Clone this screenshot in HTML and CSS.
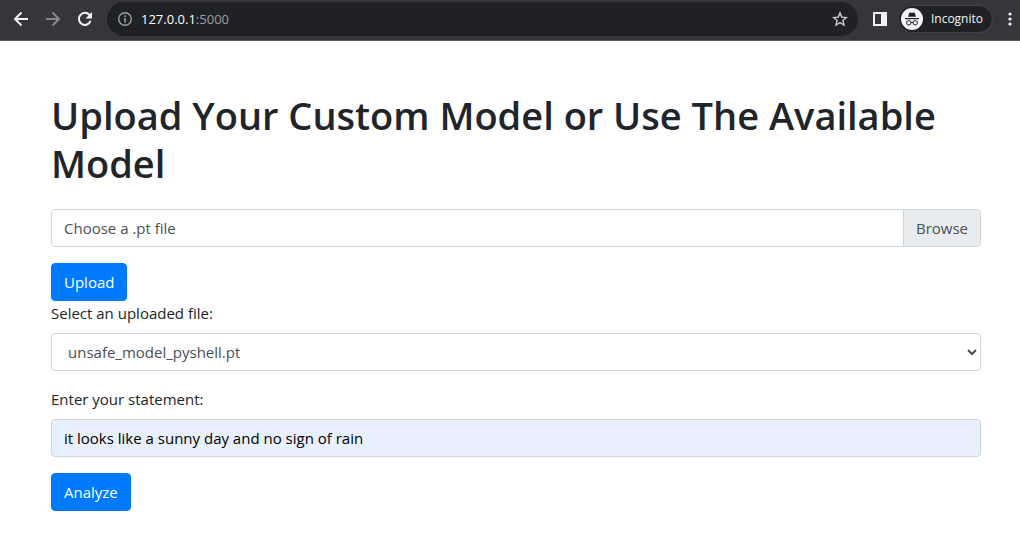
FILE: index.html
```html
<!DOCTYPE html>
<html lang="en">
<head>
<meta charset="utf-8">
<title>Upload Your Custom Model</title>
<link rel="stylesheet" href="styles.css">
</head>
<body>
<header class="toolbar">
  <nav class="nav">
    <button class="icon-btn" type="button" aria-label="Back"><svg width="16" height="16" viewBox="0 0 16 16" fill="none" stroke="#f1f3f4" stroke-width="2"><path d="M15 8H2.5M8.5 1.5L2 8l6.500 6.500"/></svg></button>
    <button class="icon-btn" type="button" aria-label="Forward"><svg width="16" height="16" viewBox="0 0 16 16" fill="none" stroke="#86888a" stroke-width="2"><path d="M1 8h12.500M7.500 1.500L14 8l-6.500 6.500"/></svg></button>
    <button class="icon-btn" type="button" aria-label="Reload"><svg width="16" height="16" viewBox="0 0 16 16"><path d="M13.600 9.800A6 6 0 1 1 12.500 4" fill="none" stroke="#f1f3f4" stroke-width="2"/><path d="M15 1v6.500H8.500z" fill="#f1f3f4"/></svg></button>
  </nav>
  <div class="address">
    <svg width="16" height="16" viewBox="0 0 16 16"><circle cx="8" cy="8" r="6.300" fill="none" stroke="#9aa0a6" stroke-width="1.400"/><path d="M7.200 7h1.600v4.500H7.200zM7.200 4.300h1.600v1.600H7.200z" fill="#9aa0a6"/></svg>
    <span class="url"><span class="host">127.0.0.1</span>:5000</span>
    <button class="star" type="button" aria-label="Bookmark this tab"><svg width="16" height="16" viewBox="0 0 16 16" fill="none" stroke="#c8cacd" stroke-width="1.400"><path d="M8 1.900l1.800 4.200 4.600.4-3.500 3 1.100 4.500L8 11.600 4 14l1.100-4.500-3.500-3 4.600-.4z"/></svg></button>
  </div>
  <button class="icon-btn" type="button" aria-label="Side panel"><svg width="16" height="16" viewBox="0 0 16 16"><path fill="#f1f3f4" fill-rule="evenodd" d="M1 1h14v14H1zM3 3v10h6V3z"/></svg></button>
  <button class="profile" type="button">
    <svg width="22" height="22" viewBox="0 0 22 22"><circle cx="11" cy="11" r="11" fill="#f1f3f4"/><path d="M7 8.800l1.200-3.700c.2-.6.700-.7 1.200-.5l1.600.5 1.600-.5c.5-.2 1-.1 1.200.5L15 8.800zM4 10h14v1.200H4z" fill="#202124"/><g fill="none" stroke="#202124"><circle cx="7.800" cy="14.800" r="2.200"/><circle cx="14.200" cy="14.800" r="2.200"/><path d="M10 14.500q1-.6 2 0"/></g></svg>
    <span>Incognito</span>
  </button>
  <button class="menu" type="button" aria-label="Menu"><svg width="4" height="16" viewBox="0 0 4 16" fill="#f1f3f4"><circle cx="2" cy="3" r="1.600"/><circle cx="2" cy="8" r="1.600"/><circle cx="2" cy="13" r="1.600"/></svg></button>
</header>
<main class="content">
  <h1 class="title">Upload Your Custom Model or Use The Available Model</h1>
  <form class="form">
    <div class="file">
      <input class="file-input" type="file" id="model-file" accept=".pt">
      <label class="file-label" for="model-file"><span class="file-text">Choose a .pt file</span><span class="file-browse">Browse</span></label>
    </div>
    <button class="btn" type="button">Upload</button>
  </form>
  <form class="form">
    <div class="group">
      <label class="label" for="uploaded">Select an uploaded file:</label>
      <select class="control" id="uploaded"><option>unsafe_model_pyshell.pt</option></select>
    </div>
    <div class="group">
      <label class="label" for="statement">Enter your statement:</label>
      <input class="control filled" type="text" id="statement" value="it looks like a sunny day and no sign of rain">
    </div>
    <button class="btn" type="button">Analyze</button>
  </form>
</main>
</body>
</html>
```
FILE: styles.css
```css
* { box-sizing: border-box; }
body {
  margin: 0;
  background: #fff;
  color: #212529;
  font: 15px/24px "Open Sans", "Noto Sans", sans-serif;
}
button, input, select { font: inherit; }
svg { display: block; flex: none; }

.toolbar {
  display: flex;
  align-items: center;
  height: 41px;
  padding: 0 8px 2px 13px;
  background: #35363a;
  border-bottom: 1px solid #5b5c5f;
}
.nav { display: flex; gap: 16px; margin-right: 14px; }
.toolbar button { color: #f1f3f4; border: 0; padding: 0; background: none; }
.address {
  flex: 1;
  display: flex;
  align-items: center;
  height: 34px;
  margin-right: 14px;
  padding: 0 10px;
  border-radius: 17px;
  background: #202124;
  color: #9aa0a6;
  font-size: 13px;
}
.url { flex: 1; margin-left: 8px; }
.host { color: #fff; }
.toolbar .profile {
  display: flex;
  align-items: center;
  gap: 8px;
  height: 28px;
  margin: 0 15px 0 10px;
  padding: 0 9px 0 2px;
  border: 1px solid #414246;
  border-radius: 14px;
  background: #202124;
  font-size: 12px;
  font-weight: 500;
}

.content { padding: 50px 39px 32px 51px; }
.title {
  margin: 0 0 22px;
  font-size: 38px;
  font-weight: 600;
  line-height: 48px;
}
.file { position: relative; margin-bottom: 16px; }
.file-input {
  position: absolute;
  inset: 0;
  width: 100%;
  opacity: 0;
}
.file-label {
  display: flex;
  height: 38px;
  border: 1px solid #ced4da;
  border-radius: 4px;
  overflow: hidden;
  color: #495057;
}
.file-text { flex: 1; padding: 6px 12px; }
.file-browse {
  padding: 6px 12px;
  border-left: 1px solid #ced4da;
  background: #e9ecef;
}
.btn {
  display: block;
  height: 38px;
  padding: 6px 12px;
  border: 1px solid #007bff;
  border-radius: 4px;
  background: #007bff;
  color: #fff;
}
.group { margin-bottom: 16px; }
.label { display: block; margin-bottom: 8px; }
.control {
  display: block;
  width: 100%;
  height: 38px;
  padding: 6px 12px;
  border: 1px solid #ced4da;
  border-radius: 4px;
  background: #fff;
  color: #495057;
}
.filled { background: #e8f0fe; color: #000; }
```
